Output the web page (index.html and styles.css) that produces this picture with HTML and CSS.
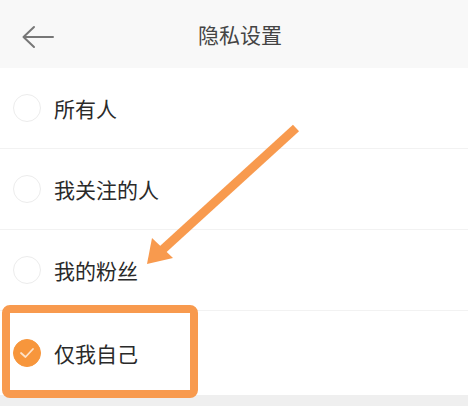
FILE: index.html
```html
<!DOCTYPE html>
<html lang="zh-CN">
<head>
    <meta charset="UTF-8">
    <meta name="viewport" content="width=device-width, initial-scale=1.0">
    <title>隐私设置</title>
    <link rel="stylesheet" href="styles.css">
</head>
<body>
    <div class="page">
        <!-- Header -->
        <div class="header">
            <svg class="back" width="34" height="24" viewBox="0 0 34 24">
                <path d="M32 12H3M13 2L2.5 12L13 22" fill="none" stroke="#777" stroke-width="2" stroke-linecap="round" stroke-linejoin="round"/>
            </svg>
            <h1>隐私设置</h1>
        </div>

        <!-- Options -->
        <div class="options">
            <div class="option">
                <span class="radio"></span>
                <span class="label">所有人</span>
            </div>
            <div class="option">
                <span class="radio"></span>
                <span class="label">我关注的人</span>
            </div>
            <div class="option">
                <span class="radio"></span>
                <span class="label">我的粉丝</span>
            </div>
            <div class="option">
                <span class="radio checked">
                    <svg width="16" height="12" viewBox="0 0 16 12">
                        <path d="M2 6L6.5 10L14 2" fill="none" stroke="#fde2c8" stroke-width="1.8" stroke-linecap="round" stroke-linejoin="round"/>
                    </svg>
                </span>
                <span class="label">仅我自己</span>
            </div>
        </div>
        <div class="footer"></div>

        <!-- Annotation drawn over the screen -->
        <svg class="marks" width="468" height="406" viewBox="0 0 468 406">
            <line x1="296" y1="128" x2="160" y2="252" stroke="#f89a4e" stroke-width="9"/>
            <polygon points="147,264 152,238 173,258" fill="#f89a4e"/>
            <rect x="6" y="309" width="188" height="85" rx="4" fill="none" stroke="#f89a4e" stroke-width="8"/>
        </svg>
    </div>
</body>
</html>
```

FILE: styles.css
```css
* {
    margin: 0;
    padding: 0;
    box-sizing: border-box;
    font-family: "Noto Sans CJK SC", "Noto Sans", sans-serif;
}

body {
    background-color: #ffffff;
}

.page {
    position: relative;
    width: 468px;
    height: 406px;
    overflow: hidden;
    display: flex;
    flex-direction: column;
}

/* Header */
.header {
    height: 68px;
    background-color: #f8f8f8;
    display: flex;
    align-items: center;
    justify-content: center;
    position: relative;
}

.header .back {
    position: absolute;
    left: 21px;
    top: 25px;
}

.header h1 {
    font-size: 21px;
    font-weight: normal;
    color: #444;
    margin-left: 12px;
}

/* Options */
.options {
    background-color: #ffffff;
}

.option {
    height: 81px;
    display: flex;
    align-items: center;
    padding-left: 13px;
    border-bottom: 1px solid #f2f2f2;
}

.option:last-child {
    height: 84px;
    border-bottom: none;
}

.radio {
    width: 28px;
    height: 28px;
    border-radius: 50%;
    border: 1.5px solid #ececec;
    display: flex;
    align-items: center;
    justify-content: center;
}

.radio.checked {
    background-color: #f7963c;
    border-color: #f7963c;
}

.label {
    margin-left: 13px;
    font-size: 21px;
    color: #2a2a2a;
}

.footer {
    flex: 1;
    background-color: #efefef;
}

/* Annotation overlay */
.marks {
    position: absolute;
    left: 0;
    top: 0;
    pointer-events: none;
}
```
